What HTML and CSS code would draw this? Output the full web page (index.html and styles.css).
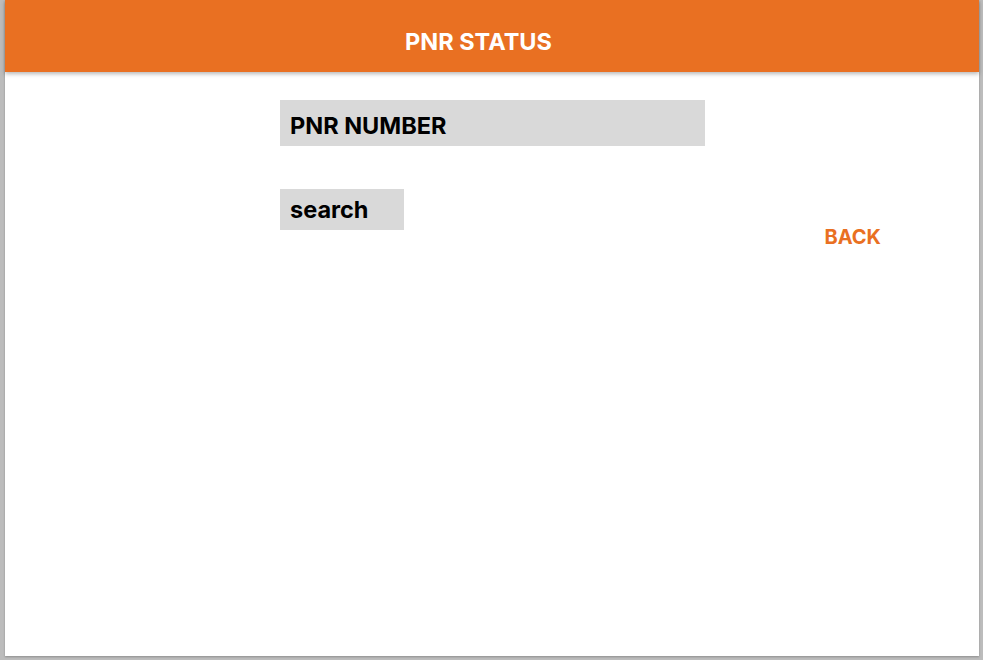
FILE: index.html
```html
<!DOCTYPE html>
<html lang="en">
<head>
<meta charset="utf-8">
<title>PNR Status</title>
<link rel="stylesheet" href="styles.css">
</head>
<body>
<div class="frame">
  <header class="topbar">
    <h1 class="title">PNR STATUS</h1>
  </header>
  <main class="content">
    <div class="pnr-input">PNR NUMBER</div>
    <div class="action-row">
      <button class="search-btn" type="button">search</button>
      <a class="back-link" href="#">BACK</a>
    </div>
  </main>
</div>
</body>
</html>
```

FILE: styles.css
```css
html, body {
  margin: 0;
  padding: 0;
}
body {
  background: #bcbcbc;
  font-family: Inter, "Noto Sans", "Liberation Sans", sans-serif;
  width: 983px;
  height: 660px;
  overflow: hidden;
  padding: 0 4px 4px 5px;
  box-sizing: border-box;
}
.frame {
  background: #ffffff;
  height: 656px;
  box-shadow: 0 1px 2px rgba(0, 0, 0, 0.25);
  display: flex;
  flex-direction: column;
}
.topbar {
  background: #e97022;
  height: 72px;
  box-sizing: border-box;
  display: flex;
  align-items: center;
  justify-content: center;
  padding: 10px 27px 0 0;
  box-shadow: 0 2px 4px rgba(0, 0, 0, 0.28);
  position: relative;
  z-index: 1;
}
.title {
  margin: 0;
  color: #ffffff;
  font-size: 23.5px;
  font-weight: 700;
}
.content {
  padding: 28px 98px 0 275px;
  display: flex;
  flex-direction: column;
}
.pnr-input {
  width: 425px;
  height: 46px;
  box-sizing: border-box;
  background: #d9d9d9;
  padding: 4px 0 0 10px;
  display: flex;
  align-items: center;
  font-size: 23.5px;
  font-weight: 700;
  color: #000;
}
.action-row {
  margin-top: 43px;
  display: flex;
  align-items: flex-start;
}
.search-btn {
  width: 124px;
  height: 41px;
  border: none;
  background: #d9d9d9;
  font-family: inherit;
  font-size: 23.5px;
  font-weight: 700;
  color: #000;
  text-align: left;
  padding: 0 0 0 10px;
}
.back-link {
  margin-left: auto;
  margin-top: 36px;
  color: #e97022;
  font-size: 20px;
  font-weight: 700;
  text-decoration: none;
}
```
